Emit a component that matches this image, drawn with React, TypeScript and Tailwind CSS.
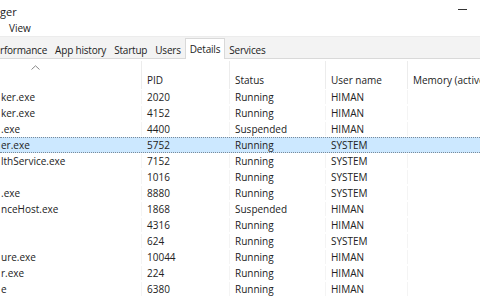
import React from "react";

const rows: [string, string, string, string][] = [
  ["ker.exe", "2020", "Running", "HIMAN"],
  ["ker.exe", "4152", "Running", "HIMAN"],
  [".exe", "4400", "Suspended", "HIMAN"],
  ["er.exe", "5752", "Running", "SYSTEM"],
  ["lthService.exe", "7152", "Running", "SYSTEM"],
  ["", "1016", "Running", "SYSTEM"],
  [".exe", "8880", "Running", "SYSTEM"],
  ["nceHost.exe", "1868", "Suspended", "HIMAN"],
  ["", "4316", "Running", "HIMAN"],
  ["", "624", "Running", "SYSTEM"],
  ["ure.exe", "10044", "Running", "HIMAN"],
  ["r.exe", "224", "Running", "HIMAN"],
  ["e", "6380", "Running", "HIMAN"],
];

const tabs = ["rformance", "App history", "Startup", "Users", "Details", "Services"];

export default function App() {
  return (
    <div
      className="w-[480px] h-[300px] overflow-hidden bg-white text-[#222] text-[10px] leading-none"
      style={{ fontFamily: '"Segoe UI", "Open Sans", "Noto Sans", sans-serif' }}
    >
      {/* title bar */}
      <div className="h-[20px] flex items-center justify-between">
        <span className="text-[11px] mt-[2px]">ger</span>
        <span className="w-[9px] h-[1px] bg-[#333] mr-[13px] -mt-[1px]" />
      </div>
      {/* menu bar */}
      <div className="h-[16px] flex items-center">
        <span className="ml-[9px]">View</span>
      </div>
      {/* tab strip */}
      <div className="h-[23px] bg-[#f3f3f3] border-t border-[#ececec] border-b border-b-[#d9d9d9] flex items-end tracking-[-0.2px]">
        {tabs.map((t, i) => {
          const sel = t === "Details";
          const cls = sel
            ? "h-[21px] bg-white border border-b-0 border-[#d9d9d9] px-[4px] pt-[5px] -mb-[1px] items-start"
            : "h-[20px] px-[4px] pt-[4px] items-center";
          const first = i === 0 ? "-ml-[4px]" : "";
          return (
            <div key={t} className={`flex shrink-0 ${cls} ${first}`}>
              <span>{t}</span>
            </div>
          );
        })}
      </div>
      {/* grid */}
      <div className="relative overflow-hidden">
        <div className="flex h-[28px] mt-[2px]">
          <div className="w-[141px] shrink-0 relative">
            <svg className="absolute left-[31px] top-[4px]" width="9" height="5" viewBox="0 0 9 5">
              <path d="M0.5 4.5 L4.5 0.8 L8.5 4.5" fill="none" stroke="#888" strokeWidth="1" />
            </svg>
          </div>
          <div className="w-[88px] shrink-0 border-l border-[#ececec] pl-[5px] pt-[14px]">PID</div>
          <div className="w-[96px] shrink-0 border-l border-[#ececec] pl-[5px] pt-[14px]">Status</div>
          <div className="w-[82px] shrink-0 border-l border-[#ececec] pl-[5px] pt-[14px]">User name</div>
          <div className="w-[73px] shrink-0 border-l border-[#ececec] pl-[5px] pt-[14px] whitespace-nowrap overflow-hidden">Memory (active private working set)</div>
        </div>
        {rows.map((r, i) => {
          const sel = i === 3;
          const cell = `h-full shrink-0 flex items-center border-l ${sel ? "border-transparent" : "border-[#f4f4f4]"} pl-[5px]`;
          return (
            <div
              key={i}
              className={`flex h-[16px] items-center ${
                sel ? "bg-[#cce8ff] border-y border-dotted border-[#7a8a99]" : "border-y border-transparent"
              }`}
            >
              <div className="w-[141px] shrink-0 whitespace-nowrap overflow-hidden">
                <span className="pl-[1px]">{r[0]}</span>
              </div>
              <div className={`w-[88px] ${cell}`}>{r[1]}</div>
              <div className={`w-[96px] ${cell}`}>{r[2]}</div>
              <div className={`w-[82px] ${cell}`}>{r[3]}</div>
              <div className={`flex-1 ${cell}`} />
            </div>
          );
        })}
      </div>
    </div>
  );
}
